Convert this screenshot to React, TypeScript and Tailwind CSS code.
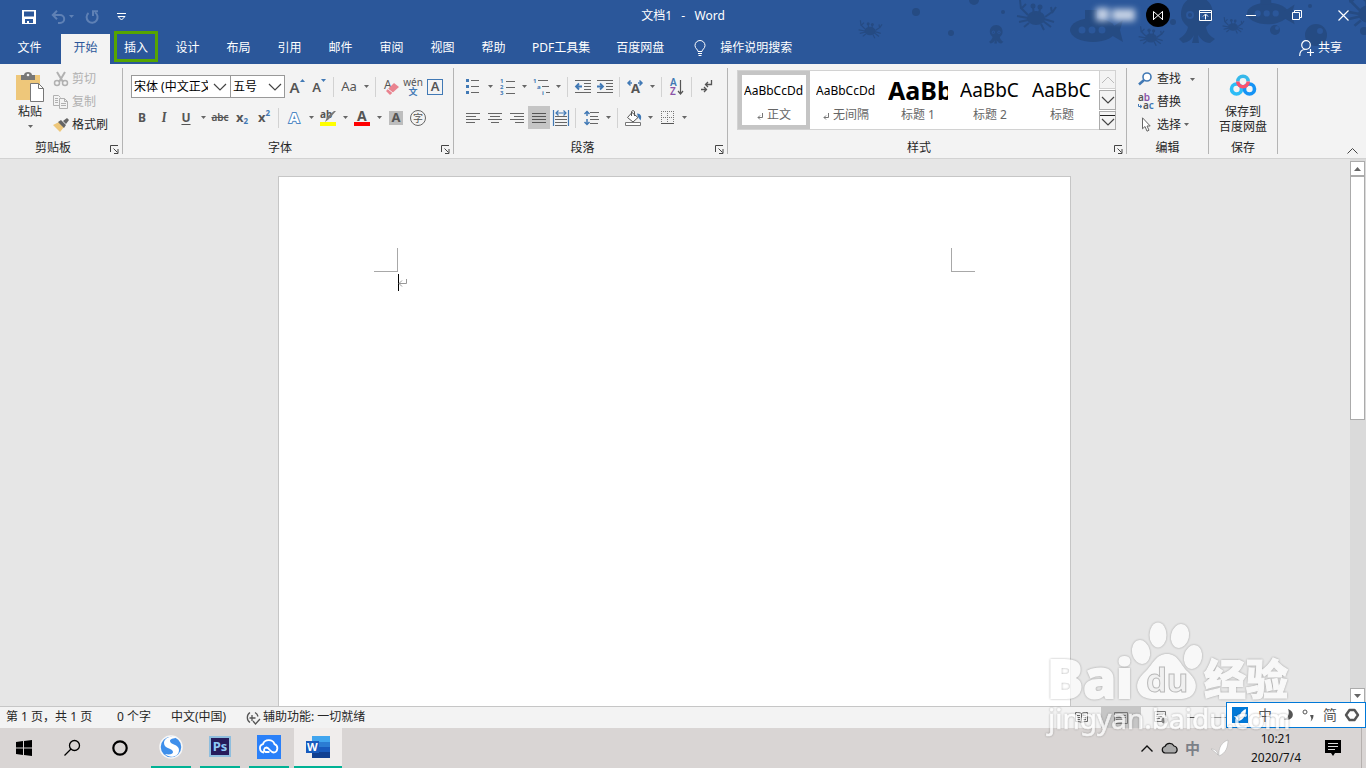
import type { ReactNode } from "react";
import clsx from "clsx";

type IconProps = { w: number; h: number; children: ReactNode; className?: string };

const Icon = ({ w, h, children, className }: IconProps) => (
  <svg
    width={w}
    height={h}
    viewBox={`0 0 ${w} ${h}`}
    fill="none"
    aria-hidden="true"
    className={clsx("shrink-0 overflow-visible", className)}
  >
    {children}
  </svg>
);

const Caret = () => (
  <Icon w={5} h={3}>
    <path d="M0 0h5L2.5 3z" fill="#666" />
  </Icon>
);

const Chevron = ({ className }: { className?: string }) => (
  <Icon w={14} h={8} className={className}>
    <path d="M1 1l6 6 6-6" stroke="#444" strokeWidth="1.2" />
  </Icon>
);

type ToolProps = { label: string; children: ReactNode; className?: string; active?: boolean };

const Tool = ({ label, children, className, active }: ToolProps) => (
  <button
    aria-label={label}
    className={clsx(
      "flex h-[23px] w-[22px] shrink-0 items-center justify-center text-[#555]",
      active && "bg-[#c5c5c5]",
      className
    )}
  >
    {children}
  </button>
);

const Drop = ({ label }: { label: string }) => (
  <button aria-label={label} className="flex h-[23px] w-3 shrink-0 items-center justify-center">
    <Caret />
  </button>
);

const Sep = () => <div className="ml-[3px] mr-1 h-5 w-px shrink-0 bg-[#d2d2d2]" />;

type GroupProps = { title: string; launcher?: boolean; children: ReactNode; className?: string };

const Group = ({ title, launcher, children, className }: GroupProps) => (
  <section
    aria-label={title}
    className={clsx("flex h-[86px] shrink-0 flex-col border-r border-[#b4b4b4]", className)}
  >
    <div className="flex-1">{children}</div>
    <div className="flex h-[14px] items-center">
      <span className="flex-1 pt-0.5 text-center leading-[14px]">{title}</span>
      {launcher && (
        <button aria-label={`${title}设置`} className="flex w-4 justify-center pt-1">
          <Icon w={9} h={9}>
            <path d="M.5 7V.5H8M3.5 3.5l4 4M8 4v4.5H4" stroke="#444" />
          </Icon>
        </button>
      )}
    </div>
  </section>
);

const tabs = ["设计", "布局", "引用", "邮件", "审阅", "视图", "帮助"];

const Crab = () => (
  <>
    <ellipse cx="20" cy="20" rx="9" ry="7" />
    <circle cx="17" cy="8" r="2.5" />
    <circle cx="24" cy="9" r="2.5" />
    <path
      d="M17 9l1 8M24 10l-1 7M12 17L5 10M5 11L4 2M5 11l5-5M29 19l7-5M36 15l-1-6M36 15l4-6M12 20l-11-2M12 22l-9 2M13 25l-5 4M28 21l10 3M27 23l8 6M25 26l3 6"
      stroke="#25497f"
      strokeWidth="2"
      fill="none"
    />
  </>
);

const Octopus = () => (
  <>
    <path d="M18 0C8 0 2 8 2 17c0 7 4 10 7 13-1 6-5 9-9 12l4 4c6-1 9-4 11-8l-2 8h7l-1-8c3 4 6 8 12 8l5-4c-5-3-8-6-9-12 4-3 7-7 7-13C34 8 28 0 18 0z" />
    <circle cx="11" cy="18" r="4" fill="#2b579a" />
    <circle cx="25" cy="18" r="4" fill="#2b579a" />
    <circle cx="11" cy="18" r="2" />
    <circle cx="25" cy="18" r="2" />
  </>
);

const Submarine = () => (
  <>
    <ellipse cx="24" cy="16" rx="23" ry="12" />
    <path d="M16 6V-4h12V6zM42 14l12-8-3 10 3 12-12-7z" />
    <circle cx="13" cy="16" r="3.5" fill="#2b579a" />
    <circle cx="23" cy="16" r="3.5" fill="#2b579a" />
    <circle cx="33" cy="16" r="3.5" fill="#2b579a" />
  </>
);

const SeaPattern = () => (
  <svg
    width="510"
    height="64"
    viewBox="0 0 510 64"
    fill="#25497f"
    aria-hidden="true"
    className="pointer-events-none absolute right-0 top-0 opacity-85"
  >
    <g transform="translate(2 19) scale(.6)"><Crab /></g>
    <g transform="translate(160 -2) scale(1)"><Crab /></g>
    <g transform="translate(133 25) scale(.4)"><Octopus /></g>
    <g transform="translate(213 14)"><Submarine /></g>
    <g transform="translate(282 25) scale(.65)"><Crab /></g>
    <g transform="translate(323 -3)"><Octopus /></g>
    <g transform="translate(390 -1) scale(.9)"><Submarine /></g>
    <g transform="translate(366 16) scale(.55)"><Crab /></g>
    <g transform="translate(488 -12) scale(1.3)"><Crab /></g>
    <circle cx="60" cy="12" r="4" />
    <circle cx="95" cy="33" r="3" />
    <circle cx="118" cy="0" r="5" />
    <circle cx="147" cy="12" r="2" />
    <circle cx="317" cy="22" r="3" />
    <circle cx="419" cy="30" r="5" />
    <circle cx="421" cy="28" r="2" fill="#2b579a" />
    <circle cx="460" cy="35" r="11" />
    <circle cx="464" cy="31" r="3" fill="#2b579a" />
    <circle cx="454" cy="6" r="2" />
    <circle cx="508" cy="31" r="4" />
  </svg>
);

const TitleBar = () => (
  <div className="relative flex h-[30px] items-center text-white">
    <div className="flex flex-1 items-center">
      <button aria-label="保存" className="ml-[18px] flex w-[22px] justify-center pt-1">
        <Icon w={14} h={14}>
          <path d="M0 0h14v14H0z" fill="#fff" />
          <path d="M2 1.500h10v5H2zM3 9h8v4H7v-2H5v2H3z" fill="#2b579a" />
        </Icon>
      </button>
      <button aria-label="撤消" className="ml-[7px] flex w-[22px] justify-center pt-1">
        <Icon w={15} h={14}>
          <path d="M2 5h7a4.200 4 0 0 1 0 8H7M6 .8L1.800 5 6 9.200" stroke="#5f81b5" strokeWidth="2" />
        </Icon>
      </button>
      <span className="flex w-[6px] pt-0.5">
        <Icon w={5} h={3}><path d="M0 0h5L2.500 3z" fill="#5f81b5" /></Icon>
      </span>
      <button aria-label="重复" className="ml-1.5 flex w-[22px] justify-center pt-1">
        <Icon w={14} h={14}>
          <path d="M3.500 3A5.500 5.500 0 1 0 10 2.500M8 6V1.200h5" stroke="#5f81b5" strokeWidth="2" />
        </Icon>
      </button>
      <button aria-label="自定义快速访问工具栏" className="ml-[7px] flex w-[22px] justify-center pt-1">
        <Icon w={9} h={8}>
          <path d="M0 .5h9M1 3.500h7L4.500 7z" stroke="#fff" />
        </Icon>
      </button>
    </div>
    <h1 className="whitespace-pre pt-0.5 text-xs">文档1   -   Word</h1>
    <div className="flex flex-1 items-center justify-end">
      <Icon w={48} h={22} className="mr-1.5 blur-[3px]">
        <path d="M4 4h13v13H4zM20 5h23v12H20z" fill="#c3d0e4" />
      </Icon>
      <button aria-label="账户" className="mr-3 flex h-6 w-6 items-center justify-center rounded-full bg-black">
        <Icon w={10} h={9}>
          <path d="M.5 9V.5l9 8V.5M9.500 9V.5l-9 8" stroke="#fff" />
        </Icon>
      </button>
      <button aria-label="功能区显示选项" className="flex h-[30px] w-[46px] items-center justify-center">
        <Icon w={13} h={11}>
          <path d="M.5 .5h12v10H.5zM.5 2.500h12M6.500 9.500V4.500M4 6.500l2.500-2.500L9 6.500" stroke="#fff" />
        </Icon>
      </button>
      <button aria-label="最小化" className="flex h-[30px] w-[46px] items-center justify-center">
        <Icon w={10} h={1}><path d="M0 .5h10" stroke="#fff" /></Icon>
      </button>
      <button aria-label="还原" className="flex h-[30px] w-[46px] items-center justify-center">
        <Icon w={10} h={10}>
          <path d="M.5 2.500h7v7h-7zM2.500 2.500v-2h7v7h-2" stroke="#fff" />
        </Icon>
      </button>
      <button aria-label="关闭" className="flex h-[30px] w-[46px] items-center justify-center">
        <Icon w={11} h={11}><path d="M.5 .5l10 10M10.500 .5l-10 10" stroke="#fff" strokeWidth="1.200" /></Icon>
      </button>
    </div>
  </div>
);

const TabBar = () => (
  <nav className="relative flex h-[34px] items-stretch text-white">
    <button className="w-[61px] pr-0.5 pt-0.5">文件</button>
    <button className="mt-1 w-[49px] bg-[#f3f3f3] pb-0.5 text-[#2b579a]">开始</button>
    <button className="mx-1 mb-[2px] mt-px w-11 border-[3px] border-[#56a500] pt-0.5">插入</button>
    {tabs.map((tab) => (
      <button key={tab} className="w-[51px] pt-0.5">{tab}</button>
    ))}
    <button className="px-[13px] pt-0.5">PDF工具集</button>
    <button className="px-[13px] pt-0.5">百度网盘</button>
    <button className="flex items-center gap-[14px] pl-[17px] pt-0.5">
      <Icon w={12} h={16}>
        <path d="M4 11.500c0-2-3-3-3-6a5 5 0 0 1 10 0c0 3-3 4-3 6zM4 13.500h4M4.500 15.500h3" stroke="#fff" />
      </Icon>
      操作说明搜索
    </button>
    <button className="ml-auto mr-6 flex items-center gap-1 pt-0.5">
      <Icon w={15} h={16}>
        <circle cx="7" cy="5" r="4.300" stroke="#fff" strokeWidth="1.200" />
        <path d="M.7 16c0-4 2-6.500 5.500-6.500M8 12.500h7M11.500 9v7" stroke="#fff" strokeWidth="1.200" />
      </Icon>
      共享
    </button>
  </nav>
);

const Clipboard = () => (
  <Group title="剪贴板" launcher className="w-[123px]">
    <div className="flex">
      <button className="flex w-[53px] flex-col items-center pl-[7px] pt-1">
        <Icon w={28} h={30}>
          <path d="M0 3h24v25H0z" fill="#eec77a" />
          <path d="M5 3h3c0-4 8-4 8 0h3v5H5z" fill="#777" />
          <circle cx="12" cy="3" r="1.300" fill="#f3f3f3" />
          <path d="M14.500 11.500h8l5 5v13h-13z" fill="#fff" stroke="#777" />
          <path d="M22.500 11.500v5h5" stroke="#777" />
        </Icon>
        <span className="pt-px leading-[18px]">粘贴</span>
        <span className="pt-1"><Caret /></span>
      </button>
      <div className="flex flex-col gap-px pb-0.5">
        <button className="flex h-[21px] items-center gap-[3px] text-[#b1b1b1]">
          <Icon w={16} h={16}>
            <path d="M4 1l6 10M12 1L6 11" stroke="#b1b1b1" strokeWidth="2" />
            <circle cx="4" cy="12" r="2.500" stroke="#b1b1b1" strokeWidth="1.500" />
            <circle cx="12" cy="12" r="2.500" stroke="#b1b1b1" strokeWidth="1.500" />
          </Icon>
          剪切
        </button>
        <button className="flex h-[23px] items-center gap-[3px] text-[#b1b1b1]">
          <Icon w={16} h={14}>
            <path d="M6 10.500H.5V.5h5l2 2M6.500 3.500h5l3 3v7h-8zM11.500 3.500v3h3M2 3.500h3M2 5.500h3M2 7.500h3M8 8.500h5M8 10.500h5" stroke="#b1b1b1" />
          </Icon>
          复制
        </button>
        <button className="flex h-[22px] items-center gap-[3px]">
          <Icon w={16} h={14}>
            <path d="M0 7l6-3 5 5-4 5z" fill="#eec77a" />
            <path d="M5 4l3-2 5 5-2 3zM10 3l4-3 2 2-3 4z" fill="#666" />
          </Icon>
          格式刷
        </button>
      </div>
    </div>
  </Group>
);

const FontGroup = () => (
  <Group title="字体" launcher className="w-[331px]">
    <div className="flex flex-col gap-2 pl-2 pt-[7px]">
      <div className="flex items-center">
        <div className="relative">
          <select aria-label="字体" className="block h-[23px] w-[100px] appearance-none rounded-none border border-[#999] bg-white pl-0.5 pr-[22px] text-black">
            <option>宋体 (中文正文)</option>
          </select>
          <Chevron className="pointer-events-none absolute right-1 top-2" />
        </div>
        <div className="relative mr-px">
          <select aria-label="字号" className="-ml-px block h-[23px] w-[55px] appearance-none rounded-none border border-[#999] bg-white pl-0.5 pr-[18px] text-black">
            <option>五号</option>
          </select>
          <Chevron className="pointer-events-none absolute right-[3px] top-2" />
        </div>
        <Tool label="增大字号">
          <span className="text-[15px] font-semibold leading-4">A</span>
          <Icon w={5} h={3} className="mb-3"><path d="M0 3h5L2.500 0z" fill="#4179b5" /></Icon>
        </Tool>
        <Tool label="减小字号">
          <span className="pt-px text-[13px] font-semibold leading-4">A</span>
          <Icon w={5} h={3} className="mb-3"><path d="M0 0h5L2.500 3z" fill="#4179b5" /></Icon>
        </Tool>
        <Sep />
        <Tool label="更改大小写"><span className="text-[13px]">Aa</span></Tool>
        <Drop label="更改大小写选项" />
        <Sep />
        <Tool label="清除所有格式">
          <Icon w={16} h={16}>
            <text x="1" y="10" fontSize="12" fill="#555">A</text>
            <path d="M3 12l8-8 5 4-9 8z" fill="#e9838f" />
            <path d="M5 10l5 4" stroke="#f3f3f3" />
          </Icon>
        </Tool>
        <Tool label="拼音指南" className="flex-col">
          <span className="text-[10px] leading-[9px]">wén</span>
          <span className="text-[9px] font-bold leading-[9px] text-[#4179b5]">文</span>
        </Tool>
        <Tool label="字符边框">
          <span className="flex h-4 w-4 items-center justify-center border border-[#4179b5] text-[13px] font-semibold leading-none">A</span>
        </Tool>
      </div>
      <div className="flex items-center">
        <Tool label="加粗"><b className="text-xs">B</b></Tool>
        <Tool label="倾斜"><i className="font-serif text-[13px] font-bold">I</i></Tool>
        <Tool label="下划线"><span className="text-xs font-bold underline underline-offset-2">U</span></Tool>
        <Drop label="下划线选项" />
        <Tool label="删除线"><s className="text-[10px] font-semibold">abc</s></Tool>
        <Tool label="下标"><b className="text-[13px]">x</b><b className="pt-2 text-[8px] text-[#4179b5]">2</b></Tool>
        <Tool label="上标"><b className="text-[13px]">x</b><b className="pb-2 text-[8px] text-[#4179b5]">2</b></Tool>
        <Sep />
        <Tool label="文本效果">
          <Icon w={16} h={16}>
            <text
              x="3"
              y="13"
              fontSize="15"
              fontWeight="bold"
              fill="#fff"
              stroke="#4f88c4"
              strokeWidth="2"
              paintOrder="stroke"
            >
              A
            </text>
          </Icon>
        </Tool>
        <Drop label="文本效果选项" />
        <Tool label="突出显示颜色">
          <Icon w={16} h={16}>
            <text x="0" y="8" fontSize="10" fontWeight="bold" fill="#555">ab</text>
            <path d="M16 1l-7 8-4 3 2-5 7-6z" fill="#777" />
            <path d="M0 12h16v4H0z" fill="#ff0" />
          </Icon>
        </Tool>
        <Drop label="突出显示选项" />
        <Tool label="字体颜色">
          <Icon w={16} h={16}>
            <text x="3" y="11" fontSize="14" fontWeight="bold" fill="#555">A</text>
            <path d="M0 12h16v4H0z" fill="#f00" />
          </Icon>
        </Tool>
        <Drop label="字体颜色选项" />
        <Tool label="字符底纹">
          <span className="flex h-[14px] w-[14px] items-center justify-center bg-[#bdbdbd] text-[13px] font-bold leading-none">A</span>
        </Tool>
        <Tool label="带圈字符">
          <span className="flex h-4 w-4 items-center justify-center rounded-full border border-[#666] text-[10px] leading-none">字</span>
        </Tool>
      </div>
    </div>
  </Group>
);

const ParagraphGroup = () => (
  <Group title="段落" launcher className="w-[274px]">
    <div className="flex flex-col gap-2 pl-2 pt-[7px]">
      <div className="flex items-center">
        <Tool label="项目符号">
          <Icon w={14} h={15}>
            <path d="M5 1.500h8M5 7.500h8M5 13.500h8" stroke="#666" />
            <path d="M0 0h3v3H0zM0 6h3v3H0zM0 12h3v3H0z" fill="#4179b5" />
          </Icon>
        </Tool>
        <Drop label="项目符号选项" />
        <Tool label="编号">
          <Icon w={15} h={16}>
            <path d="M6 2.500h9M6 8.500h9M6 14.500h9" stroke="#666" />
            <g fill="#4179b5" fontSize="6" fontWeight="bold">
              <text x="0" y="4">1</text>
              <text x="0" y="10">2</text>
              <text x="0" y="16">3</text>
            </g>
          </Icon>
        </Tool>
        <Drop label="编号选项" />
        <Tool label="多级列表">
          <Icon w={17} h={16}>
            <path d="M5 1.500h10M9 7.500h7M13 13.500h4" stroke="#666" />
            <g fill="#4179b5" fontSize="6" fontWeight="bold">
              <text x="0" y="4">1</text>
              <text x="4" y="10">a</text>
              <text x="9" y="16">i</text>
            </g>
          </Icon>
        </Tool>
        <Drop label="多级列表选项" />
        <Sep />
        <Tool label="减少缩进量">
          <Icon w={16} h={14}>
            <path d="M0 .5h16M9 3.500h7M9 6.500h7M9 9.500h7M0 12.500h16" stroke="#666" />
            <path d="M1 6.500h6M4 3.500l-3 3 3 3" stroke="#4179b5" strokeWidth="1.800" />
          </Icon>
        </Tool>
        <Tool label="增加缩进量">
          <Icon w={16} h={14}>
            <path d="M0 .5h16M9 3.500h7M9 6.500h7M9 9.500h7M0 12.500h16" stroke="#666" />
            <path d="M0 6.500h6M3 3.500l3 3-3 3" stroke="#4179b5" strokeWidth="1.800" />
          </Icon>
        </Tool>
        <Sep />
        <Tool label="中文版式">
          <Icon w={16} h={13}>
            <text x="4" y="13" fontSize="13" fontWeight="bold" fill="#555">A</text>
            <path d="M5 3H1M3.500 .5L1 3l2.500 2.500M11 3h4M12.500 .5L15 3l-2.500 2.500" stroke="#4179b5" strokeWidth="1.500" />
          </Icon>
        </Tool>
        <Drop label="中文版式选项" />
        <Sep />
        <Tool label="排序">
          <Icon w={14} h={16}>
            <text x="0" y="7" fontSize="10" fontWeight="600" fill="#4179b5">A</text>
            <text x="0" y="16" fontSize="10" fontWeight="600" fill="#8b53a8">Z</text>
            <path d="M10.500 1v14M8 12l2.500 3 2.500-3" stroke="#555" strokeWidth="1.200" />
          </Icon>
        </Tool>
        <Sep />
        <Tool label="显示编辑标记">
          <Icon w={12} h={13}>
            <path d="M10.500 0v4.500H5M7 2L4.500 4.500 7 7M0 9.500h5M3 7l2.500 2.500L3 12" stroke="#555" strokeWidth="1.300" />
          </Icon>
        </Tool>
      </div>
      <div className="flex items-center">
        <Tool label="左对齐">
          <Icon w={14} h={10}><path d="M0 .5h14M0 3.500h10M0 6.500h14M0 9.500h9" stroke="#666" /></Icon>
        </Tool>
        <Tool label="居中">
          <Icon w={14} h={10}><path d="M0 .5h14M2 3.500h10M0 6.500h14M3 9.500h8" stroke="#666" /></Icon>
        </Tool>
        <Tool label="右对齐">
          <Icon w={14} h={10}><path d="M0 .5h14M4 3.500h10M0 6.500h14M5 9.500h9" stroke="#666" /></Icon>
        </Tool>
        <Tool label="两端对齐" active>
          <Icon w={14} h={10}><path d="M0 .5h14M0 3.500h14M0 6.500h14M0 9.500h14" stroke="#555" /></Icon>
        </Tool>
        <Tool label="分散对齐">
          <Icon w={16} h={16}>
            <path d="M2 6.500h12M2 9.500h12M2 12.500h12M2 15.500h12" stroke="#666" />
            <path d="M.5 0v16M15.500 0v16M3 3h10M5.500 .5L3 3l2.500 2.500M10.500 .5L13 3l-2.500 2.500" stroke="#4179b5" strokeWidth="1.200" />
          </Icon>
        </Tool>
        <Sep />
        <Tool label="行和段落间距">
          <Icon w={15} h={16}>
            <path d="M6 2.500h9M6 6.500h8M6 9.500h9M6 13.500h8" stroke="#666" />
            <path d="M3 1v5M.5 4L3 1.500 5.500 4M3 9v6M.5 12L3 14.500 5.500 12" stroke="#4179b5" strokeWidth="1.500" />
          </Icon>
        </Tool>
        <Drop label="行距选项" />
        <Sep />
        <Tool label="底纹">
          <Icon w={17} h={16}>
            <path d="M.5 12.500h15v3H.5z" fill="#fff" stroke="#777" />
            <path d="M7 2.500l6 5-5 4.500-5.500-4.500zM6.500 6V1.500q1.500-2 3 0V6" fill="#fff" stroke="#555" />
            <path d="M12 3.500c4 0 5 3 3.500 7L13 7z" fill="#4179b5" />
          </Icon>
        </Tool>
        <Drop label="底纹选项" />
        <Tool label="边框">
          <Icon w={13} h={13}>
            <path d="M0 .5h13M0 6.500h13M.5 0v12M6.500 0v12M12.500 0v12" stroke="#777" strokeDasharray="1 1" />
            <path d="M0 12.500h13" stroke="#555" />
          </Icon>
        </Tool>
        <Drop label="边框选项" />
      </div>
    </div>
  </Group>
);

const styleItems = [
  { name: "正文", sample: "AaBbCcDd", size: "text-xs", mark: true, active: true },
  { name: "无间隔", sample: "AaBbCcDd", size: "text-xs", mark: true },
  { name: "标题 1", sample: "AaBb", size: "text-[25px] font-bold" },
  { name: "标题 2", sample: "AaBbC", size: "text-[19px]" },
  { name: "标题", sample: "AaBbC", size: "text-[19px]" },
];

const StylesGroup = () => (
  <Group title="样式" launcher className="w-[399px]">
    <div className="ml-[9px] mr-2.5 mt-0.5 flex h-[60px] border border-[#d2d2d2] bg-white">
      {styleItems.map((item) => (
        <button
          key={item.name}
          className={clsx(
            "flex w-[72px] flex-col border-4 px-0.5 text-[#666]",
            item.active ? "border-[#c5c5c5]" : "border-transparent"
          )}
        >
          <span className={clsx("flex h-[31px] w-full items-center overflow-x-clip text-black", item.size)}>
            {item.sample}
          </span>
          <span className="flex w-full items-center justify-center gap-1 leading-[18px]">
            {item.mark && (
              <Icon w={6} h={7} className="mt-0.5">
                <path d="M5.500 0v4.500H1M3 2.500L1 4.500l2 2" stroke="#777" />
              </Icon>
            )}
            {item.name}
          </span>
        </button>
      ))}
      <div className="-my-px -mr-px ml-auto flex w-[17px] flex-col gap-px">
        <button aria-label="上一行" className="flex flex-1 items-center justify-center border border-[#d2d2d2] bg-[#f3f3f3]">
          <Icon w={14} h={8}><path d="M1 7l6-6 6 6" stroke="#bbb" /></Icon>
        </button>
        <button aria-label="下一行" className="flex flex-1 items-center justify-center border border-[#ababab] bg-[#f3f3f3]">
          <Chevron />
        </button>
        <button aria-label="其他样式" className="flex flex-1 flex-col items-center justify-center gap-0.5 border border-[#ababab] bg-[#f3f3f3]">
          <Icon w={15} h={1}><path d="M0 .5h15" stroke="#222" /></Icon>
          <Chevron />
        </button>
      </div>
    </div>
  </Group>
);

const EditGroup = () => (
  <Group title="编辑" className="w-[82px]">
    <div className="flex flex-col pl-[11px]">
      <button className="flex h-[22px] items-center gap-[3px]">
        <Icon w={16} h={14}>
          <circle cx="9" cy="5" r="4" stroke="#4179b5" strokeWidth="1.600" fill="#fff" />
          <path d="M6 8l-5 4.500" stroke="#4179b5" strokeWidth="2.500" />
        </Icon>
        查找
        <span className="pl-1.5"><Caret /></span>
      </button>
      <button className="flex h-[23px] items-center gap-[3px]">
        <Icon w={16} h={16}>
          <g fontSize="10" fontWeight="600">
            <text x="0" y="7" fill="#555">a<tspan fill="#8b53a8">b</tspan></text>
            <text x="5" y="15" fill="#555">a<tspan fill="#4179b5">c</tspan></text>
          </g>
          <path d="M.5 10v2.500h3M2 11l2 1.500L2 14" stroke="#4179b5" />
        </Icon>
        替换
      </button>
      <button className="flex h-[23px] items-center gap-[3px]">
        <Icon w={16} h={15}>
          <path d="M4.500 .8v11l2.500-2.300 2 4.700 2-1-2-4.200h3.200z" fill="#fff" stroke="#666" />
        </Icon>
        选择
        <Caret />
      </button>
    </div>
  </Group>
);

const SaveGroup = () => (
  <Group title="保存" className="w-[69px]">
    <button className="flex w-full flex-col items-center pt-1.5 leading-[15px]">
      <Icon w={26} h={22} className="mb-2">
        <circle cx="6.500" cy="15" r="5" stroke="#2cbcf6" strokeWidth="3.600" />
        <circle cx="19.500" cy="15" r="5" stroke="#1593f5" strokeWidth="3.600" />
        <path d="M7.800 7.500a5.200 5.200 0 0 1 10.400 0" stroke="#36b8ea" strokeWidth="3.600" />
        <path d="M7.800 7.500a5.200 5.200 0 0 0 10.400 0" stroke="#f9506e" strokeWidth="3.600" />
      </Icon>
      <span>保存到</span>
      <span>百度网盘</span>
    </button>
  </Group>
);

const Ribbon = () => (
  <div className="flex h-[95px] shrink-0 border-b border-[#d2d2d2] bg-[#f3f3f3] pt-1 text-[#262626]">
    <Clipboard />
    <FontGroup />
    <ParagraphGroup />
    <StylesGroup />
    <EditGroup />
    <SaveGroup />
    <button aria-label="折叠功能区" className="ml-auto mr-2 self-end pb-1">
      <Icon w={11} h={6}><path d="M.5 5.500l5-5 5 5" stroke="#444" /></Icon>
    </button>
  </div>
);

const Workspace = () => (
  <main className="flex min-h-0 flex-1 bg-[#e6e6e6]">
    <div className="flex flex-1 justify-center overflow-hidden pr-px pt-[17px]">
      <article className="w-[793px] shrink-0 border border-b-0 border-[#c6c6c6] bg-white px-[95px] pt-[71px]">
        <div className="flex justify-between">
          <span className="h-6 w-6 border-b border-r border-[#a8a8a8]" />
          <span className="h-6 w-6 border-b border-l border-[#a8a8a8]" />
        </div>
        <p className="ml-6 mt-0.5 flex items-center">
          <span className="h-[17px] w-px bg-black" />
          <Icon w={8} h={8}>
            <path d="M7.500 0v4.500H0M3 1.500l-3 3 3 3" stroke="#999" />
          </Icon>
        </p>
      </article>
    </div>
    <div className="flex w-4 flex-col bg-[#dadada] pb-[3px] pr-px pt-0.5">
      <button aria-label="向上滚动" className="flex h-[15px] items-center justify-center border border-[#ababab] bg-white">
        <Icon w={7} h={4}><path d="M0 4h7L3.500 0z" fill="#666" /></Icon>
      </button>
      <div className="h-[45%] border border-[#ababab] bg-white" />
      <button aria-label="向下滚动" className="mt-auto flex h-[15px] items-center justify-center border border-[#ababab] bg-white">
        <Icon w={7} h={4}><path d="M0 0h7L3.500 4z" fill="#666" /></Icon>
      </button>
    </div>
  </main>
);

const StatusBar = () => (
  <footer className="flex h-[22px] shrink-0 items-center border-t border-[#c6c6c6] bg-[#f3f3f3] pb-0.5 text-[#262626]">
    <span className="ml-1.5 w-[111px]">第 1 页，共 1 页</span>
    <span className="w-[54px]">0 个字</span>
    <span className="w-[74px]">中文(中国)</span>
    <Icon w={16} h={14} className="mr-0.5 mt-0.5">
      <path d="M5 1.500a6 6 0 0 0 0 10M10 1.500a6 6 0 0 1 3 4M7 4v6M4.500 7h6M8 10l2.500 3L15 8" stroke="#555" strokeWidth="1.300" />
    </Icon>
    <span>辅助功能: 一切就绪</span>
    <div className="-mb-0.5 ml-auto mr-[140px] flex h-[21px] items-center">
      <button aria-label="阅读视图" className="flex w-10 justify-center">
        <Icon w={13} h={11}>
          <path d="M6.500 1.500C5 .5 3 .5.500 .5v9c2.500 0 4.500 0 6 1 1.500-1 3.500-1 6-1v-9c-2.500 0-4.500 0-6 1zv9M2 3.500h3M2 5.500h3M2 7.500h3M8 3.500h3M8 5.500h3M8 7.500h3" stroke="#666" />
        </Icon>
      </button>
      <button aria-label="页面视图" className="flex h-full w-10 items-center justify-center bg-[#c6c6c6]">
        <Icon w={14} h={12}><path d="M.5 .5h13v11H.5zM2 3.500h10M2 5.500h10M2 7.500h7" stroke="#777" /></Icon>
      </button>
      <button aria-label="Web 版式视图" className="flex w-10 justify-center">
        <Icon w={14} h={13}>
          <path d="M8 10.500H.5V.5h11V6M2 3.500h7M2 5.500h6M2 7.500h4" stroke="#777" />
          <circle cx="10.500" cy="9.500" r="3" fill="#888" />
        </Icon>
      </button>
      <button aria-label="缩小" className="flex w-5 justify-center">
        <Icon w={8} h={1}><path d="M0 .5h8" stroke="#555" /></Icon>
      </button>
      <span className="ml-2.5 h-px w-[15px] bg-[#999]" />
    </div>
  </footer>
);

const Taskbar = () => (
  <div className="flex h-10 shrink-0 bg-[#d9d5d4] text-[#111]">
    <button aria-label="开始" className="flex w-12 items-center justify-center">
      <Icon w={16} h={16}>
        <path d="M0 2l7-1v6.500H0zM8 1l8-1v7.500H8zM0 8.500h7V15l-7-1zM8 8.500h8V16l-8-1z" fill="#000" />
      </Icon>
    </button>
    <button aria-label="搜索" className="flex w-12 items-center justify-center">
      <Icon w={16} h={16}>
        <circle cx="10.500" cy="5.500" r="5" stroke="#000" strokeWidth="1.300" />
        <path d="M7 9l-6.500 6.500" stroke="#000" strokeWidth="1.300" />
      </Icon>
    </button>
    <button aria-label="Cortana" className="flex w-12 items-center justify-center">
      <Icon w={16} h={16}><circle cx="8" cy="8" r="6.700" stroke="#000" strokeWidth="2.200" /></Icon>
    </button>
    <div className="ml-[7px] flex gap-[9px]">
      <button aria-label="搜狗浏览器" className="flex w-10 items-center justify-center border-b-2 border-[#00b294]">
        <Icon w={24} h={24}>
          <circle cx="12" cy="12" r="11" fill="#3f8fea" stroke="#f7f7f7" strokeWidth="1.500" />
          <path d="M18 3C12 0 5 3 5 8c0 6 9 5 9 9 0 2-3 3-8 2 5 5 14 3 14-4 0-6-9-5-9-9 0-2 3-3 7-3z" fill="#fff" />
        </Icon>
      </button>
      <button className="flex w-10 items-center justify-center border-b-2 border-[#00b294] pb-0.5">
        <span className="flex h-[21px] w-[22px] items-center justify-center border-2 border-[#8fbede] bg-[#261b5b] text-[13px] font-bold leading-none text-[#8fc8f5]">Ps</span>
      </button>
      <button aria-label="云盘" className="flex w-10 items-center justify-center border-b-2 border-[#00b294]">
        <Icon w={24} h={24}>
          <path d="M0 0h24v24H0z" fill="#2a80f9" />
          <path d="M7 17.500a4.300 4.300 0 0 1-1-8.400 6 5.500 0 0 1 11.500 0A4.400 4.400 0 0 1 17 17.500c-4 0-4.500-4.500-7.500-5-2.500 0-3.500 3.500-1 4.500h4" stroke="#fff" strokeWidth="1.800" />
        </Icon>
      </button>
    </div>
    <button aria-label="Word" className="ml-[5px] flex w-12 items-center justify-center border-b-2 border-[#00b294] bg-[#f0edec]">
      <Icon w={24} h={22}>
        <path d="M6 0h18v6H6z" fill="#41a5ee" />
        <path d="M6 6h18v5H6z" fill="#2b7cd3" />
        <path d="M6 11h18v5H6z" fill="#185abd" />
        <path d="M6 16h18v6H6z" fill="#103f91" />
        <path d="M0 5h13v12H0z" fill="#185abd" />
        <text x="1" y="15" fontSize="11" fontWeight="bold" fill="#fff">W</text>
      </Icon>
    </button>
    <div className="ml-auto flex items-center">
      <Icon w={12} h={7} className="mr-2"><path d="M.5 6.500L6 1l5.500 5.500" stroke="#111" strokeWidth="1.400" /></Icon>
      <Icon w={18} h={12} className="mr-1.5">
        <path d="M4 11a3.300 3.300 0 0 1 0-6.500 5 5 0 0 1 9-.5 3.700 3.700 0 0 1 1 7z" fill="#aaa" stroke="#111" strokeWidth="1.200" />
      </Icon>
      <span className="mr-2.5 w-4 text-[15px] font-bold text-[#7c8087]">中</span>
      <Icon w={18} h={17} className="mr-[17px]">
        <path d="M8 16C7 8 11 2 17 0c0 7-2 13-9 16zM7 15C5 13 3 11 0 9c4 0 6 2 7 6z" fill="#fff" stroke="#aaa" strokeWidth=".5" />
      </Icon>
      <div className="flex w-[60px] flex-col items-center leading-[19px]">
        <time>10:21</time>
        <time>2020/7/4</time>
      </div>
      <button aria-label="通知" className="ml-[19px] mr-5">
        <Icon w={16} h={16}>
          <path d="M0 0h16v13h-6l-2 3-2-3H0z" fill="#000" />
          <path d="M3 3.500h10M3 6.500h10M3 9.500h7" stroke="#ddd" />
        </Icon>
      </button>
      <span className="mr-1 h-10 w-px bg-[#b5b0ae]" />
    </div>
  </div>
);

// floats over the status bar at the bottom right corner
const ImeBar = () => (
  <div className="absolute bottom-10 right-0 flex h-[26px] w-[140px] items-center border border-[#0078d7] bg-white text-[#555]">
    <span className="ml-[5px] flex h-4 w-4 items-center justify-center bg-[#0078d7]">
      <Icon w={14} h={14}>
        <path d="M6 13C6 7 8 3 13 1c0 6-2 10-7 12zM6 13C4 12 3 10 1 8c3 0 4 1 5 5z" fill="#fff" />
      </Icon>
    </span>
    <span className="ml-2.5 text-sm">中</span>
    <Icon w={10} h={12} className="ml-3">
      <path d="M4 0c6 2 7 9 0 11-2 0-3 0-4-1 4-1 6-5 4-10z" fill="#555" />
    </Icon>
    <Icon w={13} h={12} className="ml-2">
      <circle cx="3" cy="3" r="2" stroke="#555" />
      <path d="M8 6h3.500c0 3-1 5-3 6.500 1-2 1-3 .5-4z" fill="#555" />
    </Icon>
    <span className="ml-2 text-sm">简</span>
    <Icon w={14} h={14} className="ml-2">
      <path d="M4.500 2h5l3.500 5-3.500 5h-5L1 7z" stroke="#555" strokeWidth="2.400" strokeLinejoin="round" />
    </Icon>
  </div>
);

const Watermark = () => (
  <svg
    width="250"
    height="130"
    viewBox="0 0 250 130"
    aria-hidden="true"
    className="pointer-events-none absolute bottom-[23px] right-[71px] overflow-visible opacity-75 drop-shadow-[0_0_1px_rgba(0,0,0,0.4)]"
    fill="#fff"
  >
    <text x="2" y="83" fontSize="54" fontWeight="800" stroke="#fff" strokeWidth="2">Bai</text>
    <ellipse cx="113" cy="20" rx="8.500" ry="12.500" />
    <ellipse cx="135" cy="21" rx="9" ry="12" transform="rotate(12 135 21)" />
    <ellipse cx="96" cy="37" rx="9" ry="12" transform="rotate(-12 96 37)" />
    <ellipse cx="148" cy="42" rx="9" ry="12" transform="rotate(12 148 42)" />
    <path d="M122 39c-11 0-14 10-21 17-8 7-12 15-6 23 5 6 14 5 27 5s21 1 26-5c6-8 2-16-6-23-7-7-9-17-20-17z" />
    <text x="101" y="77" fontSize="33" fontWeight="bold" fill="#f4f4f4" stroke="#aaa">du</text>
    <text x="159" y="80" fontSize="42" fontWeight="900" stroke="#fff">经验</text>
    <text x="3" y="114" fontSize="28" stroke="#fff" strokeWidth=".6">jingyan.baidu.com</text>
  </svg>
);

const App = () => {
  return (
    <div className="relative flex h-screen flex-col overflow-hidden font-['Noto_Sans','Noto_Sans_CJK_SC',sans-serif] text-xs">
      <header className="relative shrink-0 bg-[#2b579a]">
        <SeaPattern />
        <TitleBar />
        <TabBar />
      </header>
      <Ribbon />
      <Workspace />
      <StatusBar />
      <Taskbar />
      <ImeBar />
      <Watermark />
    </div>
  );
};

export default App;
